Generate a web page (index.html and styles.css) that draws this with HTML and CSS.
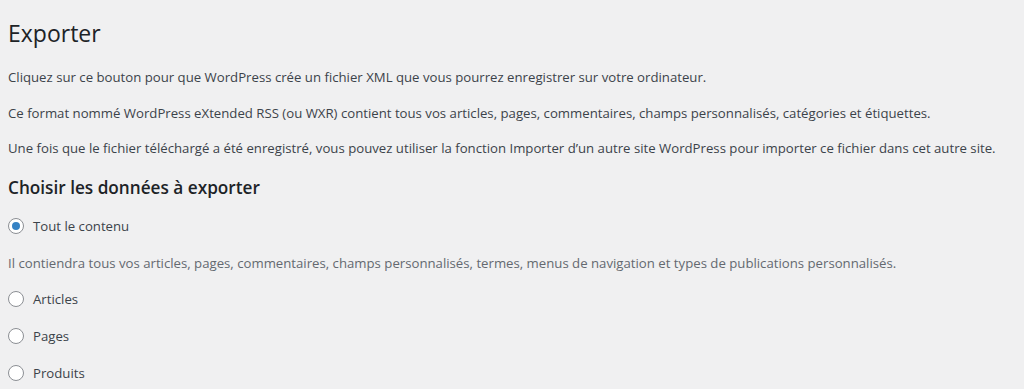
FILE: index.html
```html
<!DOCTYPE html>
<html lang="fr">
<head>
<meta charset="utf-8">
<link rel="stylesheet" href="styles.css">
</head>
<body>
<div class="wrap">
  <h1 class="title">Exporter</h1>
  <p class="text">Cliquez sur ce bouton pour que WordPress crée un fichier XML que vous pourrez enregistrer sur votre ordinateur.</p>
  <p class="text">Ce format nommé WordPress eXtended RSS (ou WXR) contient tous vos articles, pages, commentaires, champs personnalisés, catégories et étiquettes.</p>
  <p class="text">Une fois que le fichier téléchargé a été enregistré, vous pouvez utiliser la fonction Importer d’un autre site WordPress pour importer ce fichier dans cet autre site.</p>
  <h2 class="subtitle">Choisir les données à exporter</h2>
  <div class="options">
    <label class="option"><span class="radio checked"></span>Tout le contenu</label>
    <p class="desc">Il contiendra tous vos articles, pages, commentaires, champs personnalisés, termes, menus de navigation et types de publications personnalisés.</p>
    <label class="option"><span class="radio"></span>Articles</label>
    <label class="option"><span class="radio"></span>Pages</label>
    <label class="option"><span class="radio"></span>Produits</label>
  </div>
</div>
</body>
</html>
```
FILE: styles.css
```css
html, body {
  margin: 0;
  padding: 0;
  background: #f0f0f1;
}
body {
  font-family: "Open Sans", "Noto Sans", sans-serif;
  font-size: 13.2px;
  color: #3c434a;
  overflow: hidden;
  height: 389px;
}
.wrap {
  padding: 0 8px;
}
.title {
  margin: 0;
  padding: 19px 0 0;
  font-size: 23px;
  font-weight: 400;
  line-height: 29px;
  color: #1d2327;
}
.text {
  margin: 0;
  line-height: 35.5px;
}
.title + .text {
  margin-top: 12px;
}
.subtitle {
  margin: 9px 0 0;
  font-size: 17.2px;
  font-weight: 600;
  line-height: 23.4px;
  color: #1d2327;
}
.options {
  margin-top: 9px;
  display: flex;
  flex-direction: column;
}
.option {
  display: flex;
  align-items: center;
  gap: 9px;
  height: 37px;
}
.desc {
  margin: 0;
  height: 36px;
  line-height: 36px;
  color: #646970;
}
.radio {
  width: 16px;
  height: 16px;
  box-sizing: border-box;
  border: 1px solid #8c8f94;
  border-radius: 50%;
  background: #fff;
  display: flex;
  align-items: center;
  justify-content: center;
  flex: none;
}
.radio.checked::after {
  content: "";
  width: 8px;
  height: 8px;
  border-radius: 50%;
  background: #3582c4;
}
```
